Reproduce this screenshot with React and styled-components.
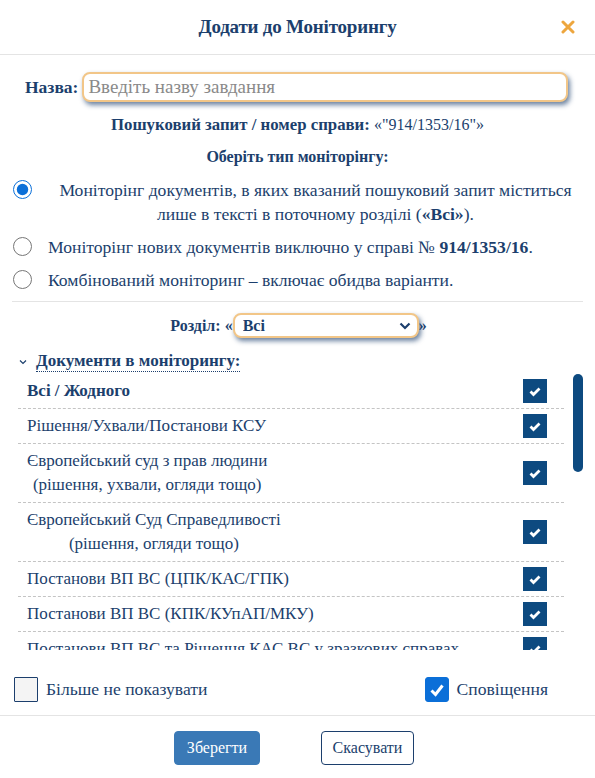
import React, { useState } from 'react';
import styled, { createGlobalStyle } from 'styled-components';

const GlobalStyle = createGlobalStyle`
  body {
    margin: 0;
    background: #fff;
    font-family: "Liberation Serif", "DejaVu Serif", serif;
    color: #1c3f6d;
  }
  * { box-sizing: border-box; }
`;

const docs = [
  { label: 'Всі / Жодного', bold: true },
  { label: 'Рішення/Ухвали/Постанови КСУ' },
  { label: 'Європейський суд з прав людини', sub: '(рішення, ухвали, огляди тощо)' },
  { label: 'Європейський Суд Справедливості', sub: '(рішення, огляди тощо)' },
  { label: 'Постанови ВП ВС (ЦПК/КАС/ГПК)' },
  { label: 'Постанови ВП ВС (КПК/КУпАП/МКУ)' },
  { label: 'Постанови ВП ВС та Рішення КАС ВС у зразкових справах' },
  { label: 'Постанови/Ухвали КАС ВС' },
  { label: 'Постанови/Ухвали КГС ВС' },
  { label: 'Постанови/Ухвали ККС ВС' },
  { label: 'Постанови/Ухвали КЦС ВС' },
  { label: 'Рішення/Ухвали ВАКС' },
  { label: 'Рішення апеляційних судів' },
  { label: 'Рішення місцевих судів' },
];

const Modal = () => {
  const [hide, setHide] = useState(false);
  const [notify, setNotify] = useState(true);
  const [type, setType] = useState(0);
  return (
    <Wrapper>
      <Header>
        <span />
        <Title>Додати до Моніторингу</Title>
        <Close aria-label='close'>
          <svg width='14' height='14' viewBox='0 0 14 14'>
            <path d='M2 2l10 10M12 2L2 12' stroke='#eda63e' strokeWidth='3' strokeLinecap='round' />
          </svg>
        </Close>
      </Header>

      <Body>
        <NameRow>
          <Label>Назва:</Label>
          <NameInput autoFocus placeholder='Введіть назву завдання' />
        </NameRow>

        <Line>
          <b>Пошуковий запит / номер справи:</b> <Small>«"914/1353/16"»</Small>
        </Line>
        <Line $small>
          <b>Оберіть тип моніторінгу:</b>
        </Line>

        <Radios>
          <RadioRow>
            <Radio type='radio' name='type' checked={type === 0} onChange={() => setType(0)} />
            <RadioText $first>
              Моніторінг документів, в яких вказаний пошуковий запит міститься
              лише в тексті в поточному розділі (<b>«Всі»</b>).
            </RadioText>
          </RadioRow>
          <RadioRow>
            <Radio type='radio' name='type' checked={type === 1} onChange={() => setType(1)} />
            <RadioText>
              Моніторінг нових документів виключно у справі № <b>914/1353/16</b>.
            </RadioText>
          </RadioRow>
          <RadioRow>
            <Radio type='radio' name='type' checked={type === 2} onChange={() => setType(2)} />
            <RadioText>Комбінований моніторинг – включає обидва варіанти.</RadioText>
          </RadioRow>
        </Radios>

        <Divider />

        <SectionRow>
          <b>Розділ: «</b>
          <SelectBox>
            <Select defaultValue='all'>
              <option value='all'>Всі</option>
            </Select>
            <SelectArrow width='12' height='8' viewBox='0 0 12 8'>
              <path d='M1.5 1.5l4.5 4.5 4.5-4.5' fill='none' stroke='#1c3f6d' strokeWidth='2.2' />
            </SelectArrow>
          </SelectBox>
          <b>»</b>
        </SectionRow>

        <DocsToggle>
          <svg width='8' height='6' viewBox='0 0 8 6'>
            <path d='M1 1.5l3 3 3-3' fill='none' stroke='#1c3f6d' strokeWidth='1.2' />
          </svg>
          <span>Документи в моніторингу:</span>
        </DocsToggle>

        <DocScroller>
          <DocList>
            {docs.map((d) => (
              <DocRow key={d.label}>
                <DocLabel $bold={d.bold}>
                  {d.label}
                  {d.sub && (
                    <>
                      <br />
                      {d.sub}
                    </>
                  )}
                </DocLabel>
                <DocCheck>
                  <svg width='14' height='12' viewBox='0 0 14 12'>
                    <path d='M2.5 6.5l3 3 6-6' fill='none' stroke='#fff' strokeWidth='2.8' />
                  </svg>
                </DocCheck>
              </DocRow>
            ))}
          </DocList>
          <Thumb />
        </DocScroller>
      </Body>

      <Options>
        <Option onClick={() => setHide(!hide)}>
          <Box $checked={hide} $variant='plain' />
          <span>Більше не показувати</span>
        </Option>
        <Option onClick={() => setNotify(!notify)}>
          <Box $checked={notify}>
            {notify && (
              <svg width='16' height='14' viewBox='0 0 16 14'>
                <path d='M2.5 7.5l4 4 7-9' fill='none' stroke='#fff' strokeWidth='3' />
              </svg>
            )}
          </Box>
          <span>Сповіщення</span>
        </Option>
      </Options>

      <Footer>
        <Button $primary>Зберегти</Button>
        <Button>Скасувати</Button>
      </Footer>
    </Wrapper>
  );
};

const Wrapper = styled.section`
  width: 595px;
  height: 778px;
  display: flex;
  flex-direction: column;
  background: #fff;
`;

const Header = styled.header`
  height: 55px;
  display: grid;
  grid-template-columns: 1fr auto 1fr;
  align-items: center;
  border-bottom: 1px solid #e4e4e4;
  padding: 0 20px 0 20px;
`;

const Title = styled.h1`
  margin: 0;
  font-size: 19px;
  font-weight: 700;
  color: #1c3f6d;
  letter-spacing: -0.2px;
`;

const Close = styled.button`
  justify-self: end;
  background: none;
  border: 0;
  padding: 0;
  display: flex;
  cursor: pointer;
`;

const Body = styled.div`
  padding: 17px 12px 0 12px;
`;

const NameRow = styled.div`
  display: flex;
  align-items: center;
  gap: 4px;
  padding-left: 13px;
`;

const Label = styled.label`
  font-size: 17.5px;
  font-weight: 700;
`;

const NameInput = styled.input`
  flex: 1;
  height: 30px;
  margin-right: 15px;
  border: 2px solid #f2c688;
  border-radius: 8px;
  padding: 0 4px;
  font-family: inherit;
  font-size: 19px;
  color: #1c3f6d;
  box-shadow: 2px 3px 5px rgba(28, 63, 109, 0.65);
  outline: none;
  caret-color: #1c3f6d;
  &::placeholder {
    color: #8a8a8a;
  }
`;

const Line = styled.p`
  margin: ${(p) => (p.$small ? '12px' : '13px')} 0 0;
  text-align: center;
  font-size: ${(p) => (p.$small ? '16px' : '16.8px')};
  line-height: 20px;
  b {
    font-weight: 700;
  }
`;

const Small = styled.span`
  font-size: 16px;
`;

const Radios = styled.div`
  display: flex;
  flex-direction: column;
  gap: 9px;
  margin-top: 11px;
`;

const RadioRow = styled.label`
  display: flex;
  align-items: flex-start;
  gap: 16px;
  font-size: 17.6px;
  line-height: 24px;
`;

const Radio = styled.input`
  width: 19px;
  height: 19px;
  margin: 2px 0 0 1px;
  accent-color: #0b6fd8;
  flex: none;
`;

const RadioText = styled.span`
  text-align: center;
  flex: ${(p) => (p.$first ? '1' : '0 1 auto')};
  b {
    font-weight: 700;
  }
`;

const Divider = styled.hr`
  border: 0;
  border-top: 1px solid #e4e4e4;
  margin: 9px 0 0;
`;

const SectionRow = styled.div`
  display: flex;
  justify-content: center;
  align-items: center;
  margin-top: 11px;
  font-size: 16px;
  padding-left: 2px;
`;

const SelectBox = styled.div`
  position: relative;
  width: 186px;
  height: 25px;
`;

const Select = styled.select`
  appearance: none;
  width: 100%;
  height: 100%;
  border: 2px solid #f2c688;
  border-radius: 8px;
  background: #fff;
  padding: 0 8px;
  font-family: inherit;
  font-weight: 700;
  font-size: 16px;
  color: #1c3f6d;
  box-shadow: 2px 3px 5px rgba(28, 63, 109, 0.65);
  outline: none;
`;

const SelectArrow = styled.svg`
  position: absolute;
  right: 8px;
  top: 9px;
  pointer-events: none;
`;

const DocsToggle = styled.div`
  display: flex;
  align-items: center;
  gap: 9px;
  margin: 13px 0 0 7px;
  font-size: 17px;
  font-weight: 700;
  span {
    border-bottom: 1px dotted #1c3f6d;
    line-height: 20px;
  }
`;

const DocScroller = styled.div`
  position: relative;
  height: 276px;
  margin: 2px 0 0 6px;
  padding-right: 19px;
`;

const DocList = styled.div`
  height: 100%;
  overflow-y: auto;
  scrollbar-width: none;
`;

const Thumb = styled.div`
  position: absolute;
  top: 0;
  right: 0;
  width: 10px;
  height: 98px;
  border-radius: 5px;
  background: #0d4a80;
`;

const DocRow = styled.div`
  display: flex;
  align-items: center;
  justify-content: space-between;
  padding: 5px 17px 5px 9px;
  border-bottom: 1px dashed #c4c4c4;
`;

const DocLabel = styled.span`
  display: inline-block;
  text-align: center;
  font-size: 17px;
  line-height: 24px;
  font-weight: ${(p) => (p.$bold ? 700 : 400)};
`;

const DocCheck = styled.span`
  flex: none;
  width: 24px;
  height: 24px;
  background: #0d4a80;
  display: flex;
  align-items: center;
  justify-content: center;
`;

const Options = styled.div`
  display: flex;
  justify-content: space-between;
  align-items: center;
  padding: 0 47px 0 14px;
  margin-top: 26px;
  height: 27px;
`;

const Option = styled.label`
  display: flex;
  align-items: center;
  gap: 8px;
  font-size: 17.6px;
  cursor: pointer;
`;

const Box = styled.span`
  width: 24px;
  height: 25px;
  display: flex;
  align-items: center;
  justify-content: center;
  border-radius: ${(p) => (p.$variant === 'plain' ? '1px' : '3px')};
  background: ${(p) => (p.$variant === 'plain' ? '#f4f4f4' : p.$checked ? '#0b6fd8' : '#fff')};
  border: 1px solid ${(p) => (p.$variant === 'plain' ? '#1c3f6d' : '#0b6fd8')};
`;

const Footer = styled.footer`
  margin-top: 12px;
  border-top: 1px solid #e4e4e4;
  display: flex;
  justify-content: center;
  gap: 61px;
  padding: 15px 7px 0 0;
`;

const Button = styled.button`
  height: 34px;
  padding: 0;
  border-radius: 4px;
  font-family: inherit;
  font-size: 16px;
  cursor: pointer;
  color: ${(p) => (p.$primary ? '#fff' : '#1c3f6d')};
  background: ${(p) => (p.$primary ? '#3a79b6' : '#fff')};
  border: 1px solid ${(p) => (p.$primary ? '#3a79b6' : '#1c3f6d')};
  width: ${(p) => (p.$primary ? '86px' : '93px')};
`;

export default function App() {
  return (
    <>
      <GlobalStyle />
      <Modal />
    </>
  );
}
